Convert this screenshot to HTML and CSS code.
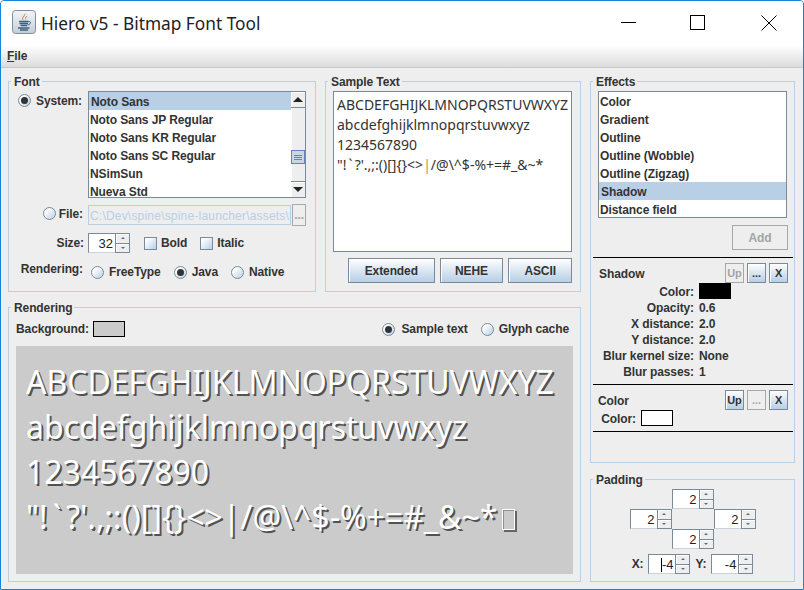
FILE: index.html
```html
<!DOCTYPE html>
<html lang="en">
<head>
<meta charset="utf-8">
<title>Hiero v5 - Bitmap Font Tool</title>
<link rel="stylesheet" href="styles.css">
</head>
<body>
<div class="window">
  <header class="titlebar">
    <svg class="app-icon" width="24" height="24" viewBox="0 0 24 24">
      <defs><linearGradient id="tile" x1="0" y1="0" x2="0" y2="1"><stop offset="0" stop-color="#f2f5f8"/><stop offset="1" stop-color="#c3ced9"/></linearGradient></defs>
      <rect x=".5" y=".5" width="23" height="23" rx="3" fill="url(#tile)" stroke="#7f8e9c"/>
      <path d="M13 3c1.500 2.500-3.500 4-1.500 7.500-3.500-2.500 1.500-4.500 1.500-7.500z" fill="#d9601a"/>
      <path d="M15.500 5.500c-2 1-3 2.500-1.500 5-1-2 .5-3.500 1.500-5z" fill="#d9601a"/>
      <path d="M7 11.500h9.500M7.500 13.500h8.500M8.500 15.500h6.500" stroke="#3f5f7f" stroke-width="1.300" fill="none"/>
      <path d="M16.500 11.500c3-.5 2.500 3-1 3.500" stroke="#3f5f7f" fill="none"/>
      <path d="M6 18h11.500M8 20h8" stroke="#3f5f7f" stroke-width="1.300" fill="none"/>
    </svg>
    <h1 class="title">Hiero v5 - Bitmap Font Tool</h1>
    <div class="controls">
      <svg class="ctl ctl-min" width="16" height="16" viewBox="0 0 16 16"><path d="M0 8.500h15" stroke="#000" fill="none"/></svg>
      <svg class="ctl ctl-max" width="16" height="16" viewBox="0 0 16 16"><rect x=".5" y=".5" width="14" height="14" stroke="#000" fill="none"/></svg>
      <svg class="ctl ctl-close" width="16" height="16" viewBox="0 0 16 16"><path d="M.5.500l15 15M15.500.500l-15 15" stroke="#000" fill="none"/></svg>
    </div>
  </header>
  <nav class="menubar"><span class="menu-item"><u>F</u>ile</span></nav>

  <main class="workspace">
    <div class="col-left">
      <div class="row-top">
        <section class="panel panel-font">
          <span class="legend">Font</span>
          <div class="font-grid">
            <div class="font-label label-system"><i class="radio on"></i><span>System:</span></div>
            <div class="listbox listbox-fonts">
              <ul class="list">
                <li class="selected">Noto Sans</li>
                <li>Noto Sans JP Regular</li>
                <li>Noto Sans KR Regular</li>
                <li>Noto Sans SC Regular</li>
                <li>NSimSun</li>
                <li>Nueva Std</li>
              </ul>
              <div class="scrollbar">
                <div class="sb-btn"><i class="tri-up"></i></div>
                <div class="sb-track"><div class="sb-thumb"></div></div>
                <div class="sb-btn"><i class="tri-down"></i></div>
              </div>
            </div>
            <div class="font-label label-file"><i class="radio"></i><span>File:</span></div>
            <div class="file-row">
              <div class="file-input">C:\Dev\spine\spine-launcher\assets\f</div>
              <div class="btn btn-browse is-disabled">...</div>
            </div>
            <div class="font-label label-size">Size:</div>
            <div class="size-row">
              <div class="spinner"><span class="spin-value">32</span><span class="spin-btns"><i class="spin-btn"><b class="tiny-up"></b></i><i class="spin-btn"><b class="tiny-down"></b></i></span></div>
              <label class="check"><i class="checkbox"></i>Bold</label>
              <label class="check"><i class="checkbox"></i>Italic</label>
            </div>
            <div class="font-label label-render">Rendering:</div>
            <div class="render-row">
              <span class="opt"><i class="radio"></i>FreeType</span>
              <span class="opt"><i class="radio on"></i>Java</span>
              <span class="opt"><i class="radio"></i>Native</span>
            </div>
          </div>
        </section>

        <section class="panel panel-sample">
          <span class="legend">Sample Text</span>
          <div class="sample-area">ABCDEFGHIJKLMNOPQRSTUVWXYZ<br>abcdefghijklmnopqrstuvwxyz<br>1234567890<br>"<span class="wide">!`</span>?'.,;:()[]{}&lt;&gt;<span class="pipe">|</span>/@\^$-%+=#_&amp;~*</div>
          <div class="sample-buttons">
            <div class="btn btn-ext">Extended</div>
            <div class="btn btn-char">NEHE</div>
            <div class="btn btn-char">ASCII</div>
          </div>
        </section>
      </div>

      <section class="panel panel-rendering">
        <span class="legend">Rendering</span>
        <div class="render-head">
          <span class="bg-label">Background:</span>
          <i class="swatch swatch-grey"></i>
          <span class="opt opt-sample"><i class="radio on"></i>Sample text</span>
          <span class="opt opt-glyph"><i class="radio"></i>Glyph cache</span>
        </div>
        <div class="preview">ABCDEFGHIJKLMNOPQRSTUVWXYZ<br>abcdefghijklmnopqrstuvwxyz<br>1234567890<br>"<span class="wide">!`</span>?'.,;:()[]{}&lt;&gt;|/@\^$-%+=#_&amp;~*<i class="tofu"></i></div>
      </section>
    </div>

    <div class="col-right">
      <section class="panel panel-effects">
        <span class="legend">Effects</span>
        <div class="listbox listbox-effects">
          <ul class="list">
            <li>Color</li>
            <li>Gradient</li>
            <li>Outline</li>
            <li>Outline (Wobble)</li>
            <li>Outline (Zigzag)</li>
            <li class="selected">Shadow</li>
            <li>Distance field</li>
          </ul>
        </div>
        <div class="add-row"><div class="btn btn-add is-disabled">Add</div></div>

        <div class="fx fx-shadow">
          <div class="fx-head">
            <span class="fx-title">Shadow</span>
            <div class="fx-btns">
              <div class="btn btn-mini is-disabled">Up</div>
              <div class="btn btn-mini">...</div>
              <div class="btn btn-mini">X</div>
            </div>
          </div>
          <div class="fx-grid">
            <span class="fx-label fx-label-first">Color:</span><i class="swatch swatch-black"></i>
            <span class="fx-label">Opacity:</span><span class="fx-value">0.6</span>
            <span class="fx-label">X distance:</span><span class="fx-value">2.0</span>
            <span class="fx-label">Y distance:</span><span class="fx-value">2.0</span>
            <span class="fx-label">Blur kernel size:</span><span class="fx-value">None</span>
            <span class="fx-label">Blur passes:</span><span class="fx-value">1</span>
          </div>
        </div>

        <div class="fx fx-color">
          <div class="fx-head">
            <span class="fx-title fx-title-color">Color</span>
            <div class="fx-btns">
              <div class="btn btn-mini">Up</div>
              <div class="btn btn-mini is-disabled">...</div>
              <div class="btn btn-mini">X</div>
            </div>
          </div>
          <div class="fx-grid fx-grid-narrow">
            <span class="fx-label fx-label-first">Color:</span><i class="swatch swatch-white"></i>
          </div>
        </div>
      </section>

      <section class="panel panel-padding">
        <span class="legend">Padding</span>
        <div class="pad-grid">
          <div class="spinner pad-top"><span class="spin-value">2</span><span class="spin-btns"><i class="spin-btn"><b class="tiny-up"></b></i><i class="spin-btn"><b class="tiny-down"></b></i></span></div>
          <div class="spinner pad-left"><span class="spin-value">2</span><span class="spin-btns"><i class="spin-btn"><b class="tiny-up"></b></i><i class="spin-btn"><b class="tiny-down"></b></i></span></div>
          <div class="spinner pad-right"><span class="spin-value">2</span><span class="spin-btns"><i class="spin-btn"><b class="tiny-up"></b></i><i class="spin-btn"><b class="tiny-down"></b></i></span></div>
          <div class="spinner pad-bottom"><span class="spin-value">2</span><span class="spin-btns"><i class="spin-btn"><b class="tiny-up"></b></i><i class="spin-btn"><b class="tiny-down"></b></i></span></div>
        </div>
        <div class="offset-row">
          <span>X:</span>
          <div class="spinner"><span class="spin-value has-caret">-4</span><span class="spin-btns"><i class="spin-btn"><b class="tiny-up"></b></i><i class="spin-btn"><b class="tiny-down"></b></i></span></div>
          <span>Y:</span>
          <div class="spinner"><span class="spin-value">-4</span><span class="spin-btns"><i class="spin-btn"><b class="tiny-up"></b></i><i class="spin-btn"><b class="tiny-down"></b></i></span></div>
        </div>
      </section>
    </div>
  </main>
</div>
</body>
</html>
```
FILE: styles.css
```css
* { box-sizing: border-box; }
html, body { margin: 0; padding: 0; width: 804px; height: 590px; overflow: hidden; background: #fff; }
body { font: bold 12px/14px "Liberation Sans", Arial, sans-serif; color: #333; letter-spacing: -.1px; }
i { font-style: normal; }
ul { list-style: none; margin: 0; padding: 0; }

.window { width: 804px; height: 590px; border: 1px solid #1883d7; border-radius: 4px 4px 0 0; background: #eee; display: flex; flex-direction: column; overflow: hidden; }

.titlebar { height: 44px; background: #fff; display: flex; align-items: flex-start; flex: none; padding: 9px 0 0 11px; }
.app-icon { flex: none; }
.title { margin: 2px 0 0 5px; font: 400 17.3px/24px "Noto Sans", sans-serif; letter-spacing: 0; color: #222; white-space: nowrap; }
.controls { margin-left: auto; display: flex; }
.ctl { display: block; flex: none; margin-top: 5px; }
.ctl-min { margin-right: 53px; margin-top: 4px; }
.ctl-max { margin-right: 55px; }
.ctl-close { margin-right: 26px; }

.menubar { height: 23px; flex: none; background: linear-gradient(#fff, #dcdcdc); border-bottom: 1px solid #c9c9c9; padding: 3px 0 0 6px; }
.menu-item { line-height: 16px; }

.workspace { flex: 1; display: flex; gap: 9px; padding: 13px 8px 7px 7px; min-height: 0; }
.col-left { width: 573px; display: flex; flex-direction: column; gap: 15px; flex: none; }
.col-right { width: 205px; display: flex; flex-direction: column; gap: 16px; flex: none; }
.row-top { display: flex; gap: 9px; height: 211px; flex: none; }

.panel { position: relative; border: 1px solid #b8cfe5; }
.legend { position: absolute; top: -7px; left: 2px; padding: 0 2px 0 3px; background: #eee; line-height: 14px; white-space: nowrap; }
.panel-font { width: 308px; }
.panel-sample { width: 256px; padding: 9px 8px 0 7px; }
.panel-rendering { flex: 1; padding: 13px 7px 6px; display: flex; flex-direction: column; gap: 9px; min-height: 0; }
.panel-effects { height: 382px; flex: none; padding-top: 9px; }
.panel-padding { flex: 1; padding-top: 9px; }

/* Metal controls */
.btn { display: flex; align-items: center; justify-content: center; border: 1px solid #7a8a99; background: linear-gradient(#fff, #dde8f3 45%, #b8cfe5); box-shadow: inset 1px 1px 0 #fff; }
.btn.is-disabled { background: #eee; box-shadow: none; border-color: #a8a8a8; color: #a4a4a4; }

.radio { width: 13px; height: 13px; border-radius: 50%; border: 1px solid #7a8a99; background: linear-gradient(135deg, #fff 20%, #b8cfe5); display: inline-grid; place-items: center; flex: none; }
.radio.on::after { content: ""; width: 7px; height: 7px; border-radius: 50%; background: #333; }
.checkbox { width: 13px; height: 13px; border: 1px solid #7a8a99; background: linear-gradient(135deg, #fff 15%, #b8cfe5); display: inline-block; flex: none; }
.swatch { display: block; width: 32px; height: 16px; border: 1px solid #000; }
.swatch-grey { background: #cbcbcb; }
.swatch-black { background: #000; }
.swatch-white { background: #fff; }

/* Lists */
.listbox { display: flex; border: 1px solid #7a8a99; background: #fff; }
.list { flex: 1; min-width: 0; overflow: hidden; }
.list li { height: 18px; line-height: 18px; padding: 1px 0 0 1px; white-space: nowrap; }
.list li.selected { background: #b8cfe5; padding-left: 2px; }
.listbox-fonts { width: 218px; height: 107px; }
.listbox-effects { width: 189px; height: 127px; margin-left: 7px; }

.scrollbar { width: 14px; flex: none; display: flex; flex-direction: column; background: #eee; box-shadow: inset 1px 0 0 #fff; }
.sb-btn { height: 16px; flex: none; display: grid; place-items: center; background: #eee; box-shadow: inset 1px 1px 0 #fff; border-bottom: 1px solid #7a8a99; }
.sb-btn:last-child { border-bottom: 0; border-top: 1px solid #7a8a99; }
.sb-track { flex: 1; }
.sb-thumb { height: 14px; margin-top: 42px; border: 1px solid #6382bf; background: repeating-linear-gradient(#c8d7e6 0 1px, #6382bf 1px 2px) 2px 3px / 8px 6px no-repeat, #c8d7e6; }
.tri-up { width: 0; height: 0; border-style: solid; border-color: transparent; border-width: 0 5px 5px; border-bottom-color: #222; }
.tri-down { width: 0; height: 0; border-style: solid; border-color: transparent; border-width: 5px 5px 0; border-top-color: #222; }

/* Font panel */
.font-grid { display: grid; grid-template-columns: 79px 218px; padding-top: 9px; }
.font-label { display: flex; justify-content: flex-end; padding-right: 5px; white-space: nowrap; }
.label-system { align-items: flex-start; padding-top: 3px; padding-right: 6px; gap: 5px; }
.label-file { margin-top: 6px; padding-top: 3px; gap: 3px; }
.label-size { margin-top: 7px; padding-top: 3px; padding-right: 4px; }
.label-render { margin-top: 9px; }
.file-row { display: flex; margin-top: 6px; height: 22px; }
.file-input { width: 204px; height: 20px; margin-top: 1px; border: 1px solid #b8cfe5; background: #eee; color: #b8cfe5; font-weight: 400; padding: 3px 0 0 1px; overflow: hidden; white-space: nowrap; letter-spacing: .2px; }
.btn-browse { width: 14px; height: 22px; margin-left: 1px; }
.size-row { display: flex; align-items: center; margin-top: 7px; height: 20px; }
.check { display: flex; align-items: center; gap: 4px; }
.size-row .spinner { margin-right: 14px; }
.size-row .check + .check { margin-left: 13px; }
.render-row { display: flex; gap: 13px; margin: 9px 0 0 3px; padding-top: 3px; }
.opt { display: inline-flex; align-items: center; gap: 5px; white-space: nowrap; }

/* Spinner */
.spinner { width: 42px; height: 20px; display: flex; background: #fff; flex: none; }
.spin-value { flex: 1; border: 1px solid #7a8a99; border-right: 0; border-bottom-color: #c9d3dd; background: #fff; text-align: right; padding: 2px 2px 0 0; font-weight: 400; font-size: 13px; letter-spacing: 0; color: #222; line-height: 16px; }
.has-caret { display: block; }
.has-caret::before { content: ""; display: inline-block; width: 1px; height: 14px; background: #000; vertical-align: -3px; }
.spin-btns { width: 15px; display: flex; flex-direction: column; flex: none; border: 1px solid #7a8a99; }
.spin-btn { flex: 1; display: grid; place-items: center; background: #eee; box-shadow: inset 1px 1px 0 #fff; }
.spin-btn + .spin-btn { border-top: 1px solid #7a8a99; }
.tiny-up { width: 0; height: 0; border: 2px solid transparent; border-top: 0; border-bottom: 2px solid #5d6d7c; }
.tiny-down { width: 0; height: 0; border: 2px solid transparent; border-bottom: 0; border-top: 2px solid #5d6d7c; }

/* Sample */
.sample-area { height: 161px; width: 239px; border: 1px solid #7a8a99; background: #fff; padding: 3px 0 0 3px; font: 400 14px/20px "Noto Sans", sans-serif; letter-spacing: 0; white-space: nowrap; overflow: hidden; color: #333; }
.wide { letter-spacing: .15em; }
.pipe { color: #c8873f; }
.sample-buttons { display: flex; gap: 5px; margin: 6px 0 0 15px; }
.sample-buttons .btn { height: 25px; }
.btn-ext { width: 87px; }
.btn-char { width: 64px; }

/* Rendering */
.render-head { display: flex; align-items: center; height: 16px; flex: none; }
.bg-label { margin-right: 4px; }
.opt-sample { margin-left: auto; margin-right: 13px; gap: 6px; }
.opt-glyph { margin-right: 4px; gap: 5px; }
.preview { height: 228px; flex: none; background: #cbcbcb; padding: 13px 0 0 10px; font: 400 32px/45px "Noto Sans", sans-serif; letter-spacing: 0; color: #fff; text-shadow: 2px 2px 0 rgba(0,0,0,.6); white-space: nowrap; }
.tofu { display: inline-block; width: 13px; height: 21px; border: 1px solid #fff; box-shadow: 2px 2px 0 rgba(0,0,0,.5), inset 1px 1px 0 rgba(0,0,0,.3); margin-left: 5px; vertical-align: -1px; }

/* Effects */
.add-row { display: flex; justify-content: flex-end; margin-top: 7px; padding-right: 6px; }
.btn-add { width: 56px; height: 25px; }
.fx { margin: 0 1px 0 2px; border-top: 1px solid #000; }
.fx-shadow { margin-top: 7px; height: 127px; padding-top: 5px; }
.fx-color { height: 48px; padding-top: 5px; border-bottom: 1px solid #000; }
.fx-head { display: flex; justify-content: space-between; height: 20px; padding: 0 5px 0 6px; align-items: center; }
.fx-title { padding-top: 2px; }
.fx-title-color { margin-left: -1px; }
.fx-btns { display: flex; gap: 3px; }
.btn-mini { width: 19px; height: 20px; font-size: 11px; }
.fx-grid { display: grid; grid-template-columns: 101px 1fr; column-gap: 5px; grid-auto-rows: 16px; align-items: center; }
.fx-grid-narrow { grid-template-columns: 43px 1fr; }
.fx-label { text-align: right; white-space: nowrap; padding-top: 2px; }
.fx-value { white-space: nowrap; padding-top: 2px; }

/* Padding */
.pad-grid { display: grid; grid-template-columns: repeat(3, 42px); grid-template-rows: repeat(3, 20px); justify-content: center; }
.pad-top { grid-column: 2; grid-row: 1; }
.pad-left { grid-column: 1; grid-row: 2; }
.pad-right { grid-column: 3; grid-row: 2; }
.pad-bottom { grid-column: 2; grid-row: 3; }
.offset-row { display: flex; justify-content: center; align-items: center; gap: 5px; margin-top: 5px; }
```
